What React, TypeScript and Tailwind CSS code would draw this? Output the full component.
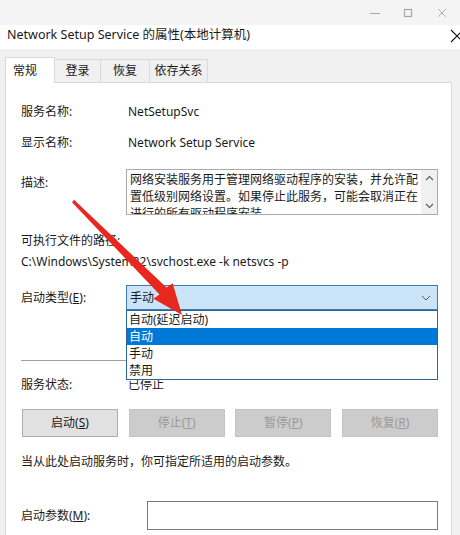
import React from 'react';

const font = "font-['Noto_Sans','Noto_Sans_CJK_SC',sans-serif]";

// one label/value row on the 常规 tab
const Row = ({ label, value, className }: { label: string; value: string; className?: string }) => (
  <div className={`flex h-[18px] items-center text-[12px] leading-[18px] ${className || ''}`}>
    <span className="w-[107px] shrink-0">{label}</span>
    <span>{value}</span>
  </div>
);

const Btn = ({ children, disabled }: { children: React.ReactNode; disabled?: boolean }) => (
  <div
    className={
      disabled
        ? 'flex h-[28px] w-[96px] items-center justify-center border border-[#c4c4c4] bg-[#cccccc] text-[12px] text-[#9a9a9a]'
        : 'flex h-[28px] w-[96px] items-center justify-center border border-[#adadad] bg-[#e1e1e1] text-[12px] text-[#1a1a1a]'
    }
  >
    {children}
  </div>
);

const App = () => {
  const options = ['自动(延迟启动)', '自动', '手动', '禁用'];

  return (
    <div className={`relative h-[535px] w-[460px] overflow-hidden bg-[#f0f0f0] text-[#1a1a1a] ${font}`}>
      {/* outer window caption */}
      <div className="flex h-[25px] items-center justify-end bg-[#f4f4f4] pr-[12px]">
        <svg width="12" height="12" viewBox="0 0 12 12" className="mr-[21px]">
          <path d="M1 6.5h10" stroke="#a8a8a8" strokeWidth="1" />
        </svg>
        <svg width="12" height="12" viewBox="0 0 12 12" className="mr-[22px]">
          <rect x="2.5" y="2.5" width="7" height="7" fill="none" stroke="#a8a8a8" strokeWidth="1.2" />
        </svg>
        <svg width="12" height="12" viewBox="0 0 12 12">
          <path d="M2 2l8 8M10 2l-8 8" stroke="#b0b0b0" strokeWidth="1" />
        </svg>
      </div>

      {/* dialog title */}
      <div className="flex h-[24px] items-center justify-between bg-white pb-[3px] pl-[7px] text-[12.5px]">
        <span>Network Setup Service 的属性(本地计算机)</span>
        <svg width="14" height="14" viewBox="0 0 14 14" className="-mr-[4px]">
          <path d="M1 1l12 12M13 1L1 13" stroke="#111" strokeWidth="1.1" />
        </svg>
      </div>

      {/* tabs */}
      <div className="flex items-end px-[5px] pt-[8px] text-[12px]">
        <div className="relative z-10 -mb-px flex h-[26px] w-[50px] items-center border border-b-0 border-[#d9d9d9] bg-white pl-[7px]">
          常规
        </div>
        <div className="flex h-[23px] w-[46px] items-center justify-center border border-l-0 border-b-0 border-[#d9d9d9]">登录</div>
        <div className="flex h-[23px] w-[49px] items-center justify-center border border-l-0 border-b-0 border-[#d9d9d9]">恢复</div>
        <div className="flex h-[23px] w-[58px] items-center justify-center border border-l-0 border-b-0 border-[#d9d9d9]">依存关系</div>
      </div>

      {/* general page */}
      <div className="ml-[5px] mr-[8px] h-[460px] border border-[#d9d9d9] bg-white pl-[15px] pr-[13px] pt-[20px]">
        <Row label="服务名称:" value="NetSetupSvc" />
        <Row label="显示名称:" value="Network Setup Service" className="mt-[13px]" />

        <div className="mt-[17px] flex">
          <span className="w-[105px] shrink-0 pt-[5px] text-[12px] leading-[18px]">描述:</span>
          <div className="flex h-[46px] flex-1 overflow-hidden border border-[#ababab]">
            <div className="flex-1 overflow-hidden pl-[3px] pt-px text-[12px] leading-[17px]">
              网络安装服务用于管理网络驱动程序的安装，并允许配置低级别网络设置。如果停止此服务，可能会取消正在进行的所有驱动程序安装。
            </div>
            <div className="flex w-[16px] flex-col items-center justify-between bg-[#f0f0f0] py-[5px]">
              <svg width="9" height="6" viewBox="0 0 9 6">
                <path d="M1 5l3.5-3.5L8 5" fill="none" stroke="#606060" strokeWidth="1.2" />
              </svg>
              <svg width="9" height="6" viewBox="0 0 9 6">
                <path d="M1 1l3.5 3.5L8 1" fill="none" stroke="#606060" strokeWidth="1.2" />
              </svg>
            </div>
          </div>
        </div>

        <div className="mt-[17px] text-[12px] leading-[18px]">可执行文件的路径:</div>
        <div className="mt-[3px] text-[12px] leading-[18px]">C:\Windows\System32\svchost.exe -k netsvcs -p</div>

        {/* startup type */}
        <div className="relative mt-[14px] flex items-center">
          <span className="w-[105px] shrink-0 text-[12px]">
            启动类型(<u>E</u>):
          </span>
          <div className="flex h-[25px] flex-1 items-center justify-between border border-[#3d7db3] bg-[#cce4f7] pl-[3px] pr-[6px] text-[12px]">
            <span>手动</span>
            <svg width="10" height="6" viewBox="0 0 10 6">
              <path d="M1 1l4 4 4-4" fill="none" stroke="#555" strokeWidth="1" />
            </svg>
          </div>
          {/* open list */}
          <div className="absolute left-[105px] right-0 top-[25px] z-10 border border-[#2a6596] bg-white text-[12px]">
            {options.map((o, i) => (
              <div
                key={o}
                className={`h-[17px] pl-[2px] leading-[17px] ${i === 1 ? 'bg-[#0078d7] text-white' : ''}`}
              >
                {o}
              </div>
            ))}
          </div>
        </div>

        <div className="mt-[50px] h-px bg-[#a0a0a0]" />

        <Row label="服务状态:" value="已停止" className="mt-[15px]" />

        <div className="mt-[15px] flex justify-between pl-px">
          <Btn>
            启动(<u>S</u>)
          </Btn>
          <Btn disabled>
            停止(<u>T</u>)
          </Btn>
          <Btn disabled>
            暂停(<u>P</u>)
          </Btn>
          <Btn disabled>
            恢复(<u>R</u>)
          </Btn>
        </div>

        <div className="mt-[16px] text-[12px] leading-[18px]">当从此处启动服务时，你可指定所适用的启动参数。</div>

        <div className="mt-[30px] flex items-center">
          <span className="w-[126px] shrink-0 text-[12px]">
            启动参数(<u>M</u>):
          </span>
          <div className="h-[29px] flex-1 border border-[#7a7a7a] bg-white" />
        </div>
      </div>

      {/* red annotation arrow */}
      <svg className="pointer-events-none absolute left-0 top-0 z-20" width="460" height="535">
        <polygon
          points="72,202.2 74,199.8 166.5,287.5 172.6,283.2 182,315 153.4,298.8 159.5,294.5"
          fill="#e8271f"
        />
      </svg>
    </div>
  );
};

export default App;
